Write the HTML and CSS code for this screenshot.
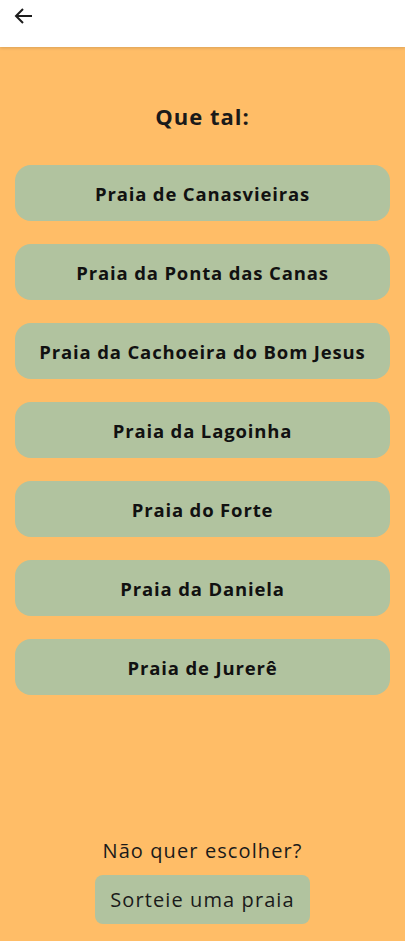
FILE: index.html
```html
<!DOCTYPE html>
<html lang="pt">
<head>
<meta charset="utf-8">
<link rel="stylesheet" href="styles.css">
</head>
<body>
<div class="app">
  <header class="topbar">
    <svg class="back" width="24" height="24" viewBox="0 0 24 24"><path d="M20 12H5M11 5l-7 7 7 7" fill="none" stroke="#1c1c1c" stroke-width="2"/></svg>
  </header>
  <main class="content">
    <h1 class="title">Que tal:</h1>
    <ul class="list">
      <li class="beach">Praia de Canasvieiras</li>
      <li class="beach">Praia da Ponta das Canas</li>
      <li class="beach">Praia da Cachoeira do Bom Jesus</li>
      <li class="beach">Praia da Lagoinha</li>
      <li class="beach">Praia do Forte</li>
      <li class="beach">Praia da Daniela</li>
      <li class="beach">Praia de Jurerê</li>
    </ul>
    <div class="footer">
      <p class="question">Não quer escolher?</p>
      <button class="random">Sorteie uma praia</button>
    </div>
  </main>
</div>
</body>
</html>
```
FILE: styles.css
```css
* { box-sizing: border-box; }
html, body { margin: 0; padding: 0; height: 100%; }
body {
  font-family: "Open Sans", "Noto Sans", sans-serif;
  background: #ffbd67;
  color: #1a1a1a;
}
.app { display: flex; flex-direction: column; height: 941px; }
.topbar {
  height: 47px;
  background: #fff;
  box-shadow: 0 1px 3px rgba(0,0,0,0.15);
  display: flex;
  align-items: flex-start;
  padding: 4px 0 0 12px;
  position: relative;
  z-index: 1;
}
.content {
  flex: 1;
  display: flex;
  flex-direction: column;
  padding: 0 15px;
}
.title {
  margin: 54px 0 0;
  text-align: center;
  font-size: 22px;
  font-weight: 700;
  line-height: 30px;
  letter-spacing: 1px;
}
.list {
  list-style: none;
  margin: 34px 0 0;
  padding: 0;
  display: flex;
  flex-direction: column;
  gap: 23px;
}
.beach {
  height: 56px;
  border-radius: 16px;
  background: #b1c39f;
  display: flex;
  align-items: center;
  justify-content: center;
  font-weight: 700;
  font-size: 18.5px;
  letter-spacing: 0.85px;
  color: #111;
}
.footer {
  margin-top: auto;
  display: flex;
  flex-direction: column;
  align-items: center;
  padding-bottom: 17px;
}
.question {
  margin: 0 0 11px;
  font-size: 20px;
  line-height: 26px;
  letter-spacing: 1.1px;
}
.random {
  font-family: inherit;
  font-size: 20px;
  letter-spacing: 1.1px;
  color: #1a1a1a;
  background: #b1c39f;
  border: none;
  border-radius: 8px;
  width: 215px;
  height: 49px;
}
```
